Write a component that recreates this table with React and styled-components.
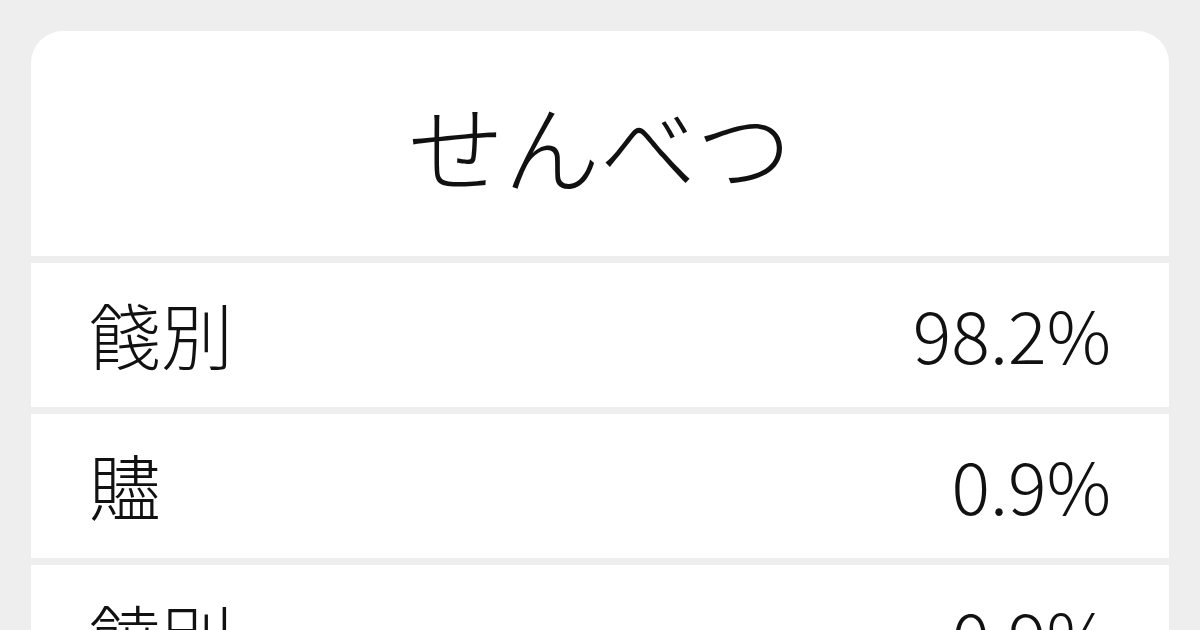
import * as React from 'react'
import styled, { createGlobalStyle } from 'styled-components'

const GlobalStyle = createGlobalStyle`
  html, body {
    margin: 0;
    padding: 0;
    background: #eeeeee;
    overflow: hidden;
  }
  body {
    font-family: 'Noto Sans CJK JP', 'Noto Sans', sans-serif;
    color: #111111;
  }
`

const Page = styled.div`
  width: 1200px;
  height: 630px;
  box-sizing: border-box;
  padding: 31px 31px 0;
  overflow: hidden;
`

const Card = styled.div`
  display: flex;
  flex-direction: column;
  gap: 7px;
`

const TitleBox = styled.div`
  height: 225px;
  background: #ffffff;
  border-radius: 32px 32px 0 0;
  display: flex;
  align-items: center;
  justify-content: center;
`

const Title = styled.h1`
  margin: 0;
  font-size: 96px;
  font-weight: 300;
  line-height: 1;
  letter-spacing: 0;
`

const Row = styled.div`
  height: 144px;
  box-sizing: border-box;
  flex-shrink: 0;
  background: #ffffff;
  display: flex;
  align-items: center;
  justify-content: space-between;
  padding: 0 58px 4px 58px;
  font-size: 72px;
  font-weight: 300;
  line-height: 1;
`

const Word = styled.span``

const Ratio = styled.span``

const results = [
  { word: '餞別', ratio: '98.2%' },
  { word: '贐', ratio: '0.9%' },
  { word: '饒別', ratio: '0.9%' }
]

export default function App() {
  return (
    <Page>
      <GlobalStyle />
      <Card>
        <TitleBox>
          <Title>せんべつ</Title>
        </TitleBox>
        {results.map(r => (
          <Row key={r.word}>
            <Word>{r.word}</Word>
            <Ratio>{r.ratio}</Ratio>
          </Row>
        ))}
      </Card>
    </Page>
  )
}
